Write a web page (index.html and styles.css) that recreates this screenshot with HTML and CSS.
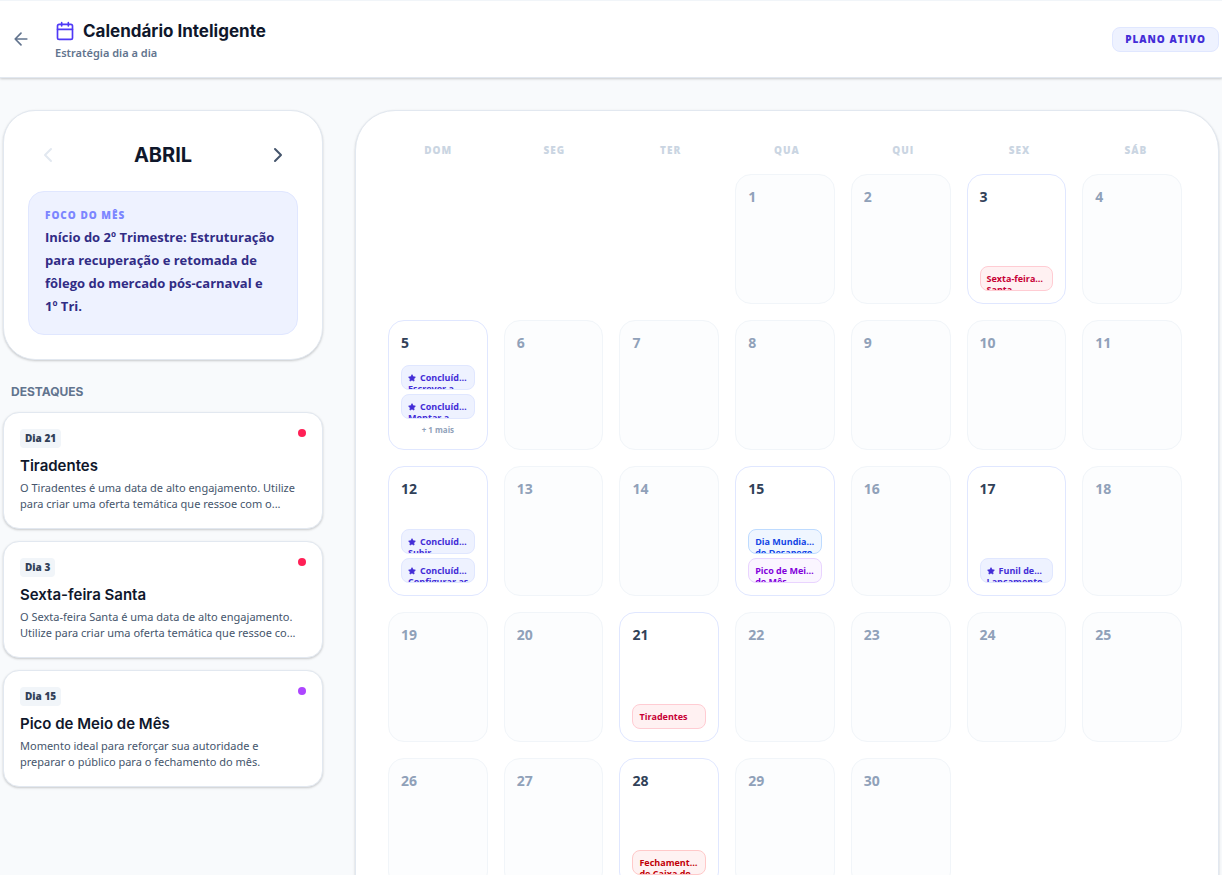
FILE: index.html
```html
<!DOCTYPE html>
<html lang="pt-BR">
<head>
<meta charset="utf-8">
<meta name="viewport" content="width=device-width, initial-scale=1">
<title>Calendário Inteligente</title>
<link rel="stylesheet" href="styles.css">
</head>
<body>
<svg class="sprite" aria-hidden="true">
  <symbol id="star" viewBox="0 0 24 24"><path d="M11.5 2.3a.53.53 0 0 1 1 0l2.3 4.7a2.1 2.1 0 0 0 1.6 1.2l5.2.7a.53.53 0 0 1 .3.9l-3.8 3.7a2.1 2.1 0 0 0-.6 1.9l.9 5.1a.53.53 0 0 1-.8.6l-4.6-2.4a2.1 2.1 0 0 0-2 0l-4.6 2.4a.53.53 0 0 1-.8-.6l.9-5.1a2.1 2.1 0 0 0-.6-1.9L2.1 9.8a.53.53 0 0 1 .3-.9l5.2-.7a2.1 2.1 0 0 0 1.6-1.2z" fill="currentColor" stroke="currentColor" stroke-width="2" stroke-linejoin="round"/></symbol>
</svg>
<header class="topbar">
  <div class="topbar-inner">
    <button class="back" type="button" aria-label="Voltar">
      <svg class="icon-20" viewBox="0 0 24 24"><path d="m12 19-7-7 7-7M19 12H5"/></svg>
    </button>
    <div class="heading">
      <h1 class="title">
        <svg class="icon-20 title-icon" viewBox="0 0 24 24"><path d="M8 2v4M16 2v4M3 10h18"/><rect x="3" y="4" width="18" height="18" rx="2"/></svg>
        Calendário Inteligente
      </h1>
      <p class="subtitle">Estratégia dia a dia</p>
    </div>
    <span class="plan">Plano ativo</span>
  </div>
</header>
<main class="layout">
  <aside class="sidebar">
    <section class="month-card">
      <div class="month-nav">
        <button class="nav-btn" type="button" aria-label="Mês anterior" disabled><svg class="icon-24" viewBox="0 0 24 24"><path d="m15 18-6-6 6-6"/></svg></button>
        <h2 class="month">ABRIL</h2>
        <button class="nav-btn" type="button" aria-label="Próximo mês"><svg class="icon-24" viewBox="0 0 24 24"><path d="m9 18 6-6-6-6"/></svg></button>
      </div>
      <div class="focus">
        <p class="focus-label">Foco do mês</p>
        <p class="focus-text">Início do 2º Trimestre: Estruturação para recuperação e retomada de fôlego do mercado pós-carnaval e 1º&nbsp;Tri.</p>
      </div>
    </section>
    <section class="highlights">
      <h3 class="section-title">DESTAQUES</h3>
      <article class="highlight">
        <div class="highlight-top"><span class="day-tag">Dia 21</span><span class="dot dot-rose"></span></div>
        <h4 class="highlight-title">Tiradentes</h4>
        <p class="highlight-text">O Tiradentes é uma data de alto engajamento. Utilize para criar uma oferta temática que ressoe com o...</p>
      </article>
      <article class="highlight">
        <div class="highlight-top"><span class="day-tag">Dia 3</span><span class="dot dot-rose"></span></div>
        <h4 class="highlight-title">Sexta-feira Santa</h4>
        <p class="highlight-text">O Sexta-feira Santa é uma data de alto engajamento. Utilize para criar uma oferta temática que ressoe co...</p>
      </article>
      <article class="highlight">
        <div class="highlight-top"><span class="day-tag">Dia 15</span><span class="dot dot-purple"></span></div>
        <h4 class="highlight-title">Pico de Meio de Mês</h4>
        <p class="highlight-text">Momento ideal para reforçar sua autoridade e preparar o público para o fechamento do mês.</p>
      </article>
    </section>
  </aside>
  <section class="calendar">
    <div class="weekdays"><span>Dom</span><span>Seg</span><span>Ter</span><span>Qua</span><span>Qui</span><span>Sex</span><span>Sáb</span></div>
    <div class="days">
      <div class="day first"><span class="num">1</span></div>
      <div class="day"><span class="num">2</span></div>
      <div class="day active"><span class="num">3</span><div class="events"><div class="event rose">Sexta-feira<br>Santa</div></div></div>
      <div class="day"><span class="num">4</span></div>
      <div class="day active"><span class="num">5</span><div class="events"><div class="event indigo"><svg class="star"><use href="#star"/></svg>Concluído:<br>Escrever a</div><div class="event indigo"><svg class="star"><use href="#star"/></svg>Concluído:<br>Montar a</div><span class="more">+ 1 mais</span></div></div>
      <div class="day"><span class="num">6</span></div>
      <div class="day"><span class="num">7</span></div>
      <div class="day"><span class="num">8</span></div>
      <div class="day"><span class="num">9</span></div>
      <div class="day"><span class="num">10</span></div>
      <div class="day"><span class="num">11</span></div>
      <div class="day active"><span class="num">12</span><div class="events"><div class="event indigo"><svg class="star"><use href="#star"/></svg>Concluído:<br>Subir</div><div class="event indigo"><svg class="star"><use href="#star"/></svg>Concluído:<br>Configurar&nbsp;as</div></div></div>
      <div class="day"><span class="num">13</span></div>
      <div class="day"><span class="num">14</span></div>
      <div class="day active"><span class="num">15</span><div class="events"><div class="event blue">Dia&nbsp;Mundial<br>do Desapego</div><div class="event purple">Pico&nbsp;de&nbsp;Meio<br>de Mês</div></div></div>
      <div class="day"><span class="num">16</span></div>
      <div class="day active"><span class="num">17</span><div class="events"><div class="event indigo"><svg class="star"><use href="#star"/></svg>Funil de<br>Lançamento</div></div></div>
      <div class="day"><span class="num">18</span></div>
      <div class="day"><span class="num">19</span></div>
      <div class="day"><span class="num">20</span></div>
      <div class="day active"><span class="num">21</span><div class="events"><div class="event rose">Tiradentes</div></div></div>
      <div class="day"><span class="num">22</span></div>
      <div class="day"><span class="num">23</span></div>
      <div class="day"><span class="num">24</span></div>
      <div class="day"><span class="num">25</span></div>
      <div class="day"><span class="num">26</span></div>
      <div class="day"><span class="num">27</span></div>
      <div class="day active"><span class="num">28</span><div class="events"><div class="event red">Fechamento<br>de Caixa do</div></div></div>
      <div class="day"><span class="num">29</span></div>
      <div class="day"><span class="num">30</span></div>
    </div>
  </section>
</main>
</body>
</html>
```
FILE: styles.css
```css
* { box-sizing: border-box; }
body, h1, h2, h3, h4, p { margin: 0; }
body {
  background: #f8fafc;
  color: #0f172b;
  font-family: "Open Sans", "Noto Sans", sans-serif;
}
button { border: 0; background: none; padding: 8px; display: flex; color: inherit; cursor: pointer; }
svg { fill: none; stroke: currentColor; stroke-width: 2; stroke-linecap: round; stroke-linejoin: round; flex: none; }
.sprite { display: none; }
.icon-20 { width: 20px; height: 20px; }
.icon-24 { width: 24px; height: 24px; }

.topbar {
  background: #fff;
  border-top: 1px solid #f1f5f9;
  border-bottom: 1px solid #e2e8f0;
  box-shadow: 0 1px 3px rgba(0, 0, 0, .1), 0 1px 2px rgba(0, 0, 0, .1);
}
.topbar-inner {
  display: flex;
  align-items: center;
  gap: 16px;
  max-width: 1216px;
  margin: 0 auto;
  padding: 16px 0;
}
.back { color: #62748e; }
.heading { flex: 1; }
.title {
  display: flex;
  align-items: center;
  gap: 8px;
  font: 700 17px/28px Inter, sans-serif;
}
.title-icon { color: #4f39f6; }
.subtitle { font: 600 11px/16px "Noto Sans", sans-serif; color: #62748e; }
.plan {
  padding: 4px 12px;
  border: 1px solid #e0e7ff;
  border-radius: 8px;
  background: #eef2ff;
  color: #432dd7;
  font-size: 10px;
  line-height: 15px;
  font-weight: 800;
  letter-spacing: 1px;
  text-transform: uppercase;
}

.layout {
  display: grid;
  grid-template-columns: 320px minmax(0, 1fr);
  align-items: start;
  gap: 32px;
  max-width: 1216px;
  margin: 0 auto;
  padding: 32px 0;
}
.sidebar { display: grid; gap: 24px; }
.month-card, .highlight, .calendar {
  background: #fff;
  border: 1px solid #e2e8f0;
  box-shadow: 0 1px 3px rgba(0, 0, 0, .1), 0 1px 2px rgba(0, 0, 0, .1);
}
.month-card { padding: 24px; border-radius: 32px; }
.month-nav { display: flex; align-items: center; justify-content: space-between; margin-bottom: 16px; }
.nav-btn { color: #45556c; }
.nav-btn:disabled { color: #e2e8f0; cursor: default; }
.month { font: 700 20px/28px Inter, sans-serif; }
.focus { padding: 16px; border: 1px solid #e0e7ff; border-radius: 16px; background: #eef2ff; }
.focus-label {
  margin-bottom: 3px;
  color: #7c86ff;
  font-size: 10px;
  line-height: 15px;
  font-weight: 800;
  letter-spacing: 1px;
  text-transform: uppercase;
}
.focus-text { color: #312c85; font-size: 13px; line-height: 23px; font-weight: 700; }

.highlights { display: grid; gap: 12px; }
.section-title { padding: 0 8px; color: #62748e; font: 700 12px/16px Inter, sans-serif; }
.highlight { padding: 16px; border-radius: 16px; }
.highlight-top { display: flex; align-items: flex-start; justify-content: space-between; margin-bottom: 8px; }
.day-tag {
  padding: 2px 5px;
  border-radius: 4px;
  background: #f1f5f9;
  color: #314158;
  font-size: 10px;
  line-height: 15px;
  font-weight: 800;
}
.dot { width: 8px; height: 8px; border-radius: 50%; }
.dot-rose { background: #ff2056; }
.dot-purple { background: #ad46ff; }
.highlight-title { margin-bottom: 4px; font: 600 15px/20px Inter, sans-serif; }
.highlight-text { color: #45556c; font: 400 11px/16px "Noto Sans", sans-serif; }

.calendar { padding: 32px; border-radius: 40px; }
.weekdays {
  display: grid;
  grid-template-columns: repeat(7, minmax(0, 1fr));
  gap: 16px;
  margin-bottom: 16px;
  color: #cad5e2;
  font-size: 10px;
  line-height: 15px;
  font-weight: 800;
  letter-spacing: 1px;
  text-align: center;
  text-transform: uppercase;
}
.days {
  display: grid;
  grid-template-columns: repeat(7, minmax(0, 1fr));
  grid-auto-rows: 130px;
  gap: 16px;
  padding-right: 4px;
}
.day {
  display: flex;
  flex-direction: column;
  justify-content: space-between;
  padding: 12px;
  border: 1px solid #f1f5f9;
  border-radius: 16px;
  background: #fcfdfe;
  color: #90a1b9;
}
.day.first { grid-column-start: 4; }
.day.active { border-color: #e0e7ff; background: #fff; color: #314158; }
.num { font-size: 14px; line-height: 20px; font-weight: 700; }
.events { display: flex; flex-direction: column; gap: 4px; }
.event {
  display: -webkit-box;
  overflow: hidden;
  -webkit-box-orient: vertical;
  -webkit-line-clamp: 1;
  padding: 6px;
  border: 1px solid;
  border-radius: 8px;
  font-size: 9px;
  line-height: 11px;
  font-weight: 700;
}
.indigo { background: #eef2ff; border-color: #e0e7ff; color: #432dd7; }
.rose { background: #fff1f2; border-color: #ffccd3; color: #c70036; }
.red { background: #fef2f2; border-color: #ffc9c9; color: #c10007; }
.blue { background: #eff6ff; border-color: #bedbff; color: #1447e6; }
.purple { background: #faf5ff; border-color: #e9d4ff; color: #8200db; }
.star { display: inline-block; width: 8px; height: 8px; margin-right: 4px; vertical-align: -1px; }
.more { color: #90a1b9; font-size: 8px; line-height: 14px; font-weight: 700; text-align: center; }
```
